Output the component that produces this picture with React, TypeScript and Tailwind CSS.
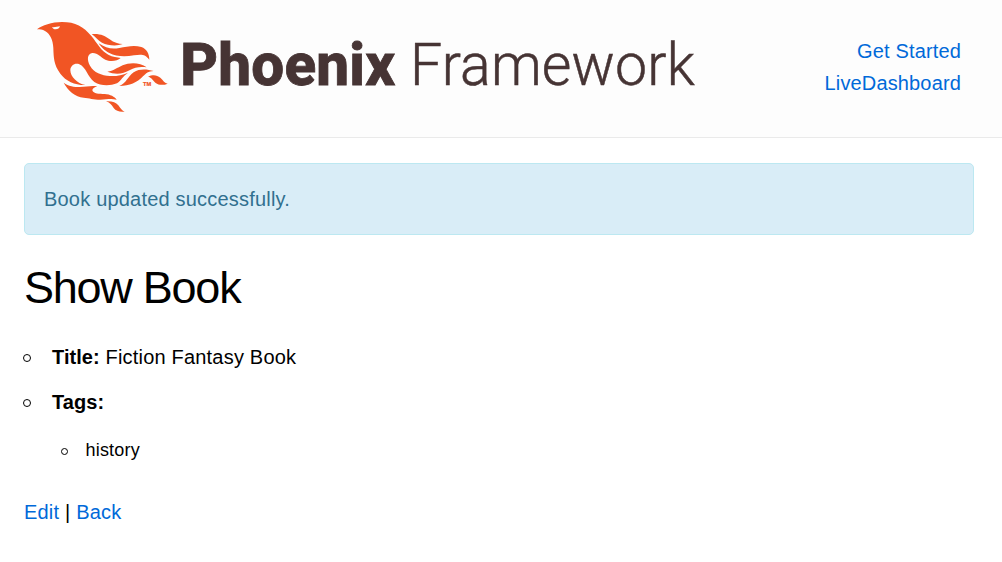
function Bird() {
  return (
    <svg className="block h-[105px] w-[145px] shrink-0" viewBox="0 0 435 315" fill="#f15524" role="img" aria-label="Phoenix">
      <path
        fillRule="evenodd"
        d="M21 43 C36 31 66 21 96 21 C137 21 160 35 184 63 C203 86 213 108 235 119 C248 126 262 127 272 129 C262 139 240 141 226 134 C212 127 203 113 187 114 C172 116 170 134 180 152 C192 173 214 181 240 183 C260 184 277 180 294 173 C278 184 274 196 261 205 C240 213 212 213 193 201 C172 185 168 156 148 148 C134 143 122 152 121 165 C121 185 141 205 166 210 C137 211 108 199 91 176 C71 149 71 127 70 99 C69 76 61 57 45 48 C38 44 29 43 21 43 Z M66 36 C73 38 82 34 90 34 C88 40 84 43 77 43 C72 43 68 40 66 36 Z"
      />
      <path d="M185 57 C211 55 225 62 239 73 C252 83 265 87 278 87 C261 94 234 92 216 83 C203 76 197 66 185 57 Z" />
      <path d="M206 85 C227 100 246 103 268 99 C291 95 311 89 334 96 C350 102 358 116 358 134 C346 118 335 117 312 121 C285 126 258 125 238 114 C222 106 214 97 206 85 Z" />
      <path d="M232 170 C250 168 262 158 278 151 C299 142 330 142 350 157 C330 154 314 157 300 165 C278 178 255 179 232 170 Z" />
      <path d="M268 213 C289 205 292 186 311 172 C329 160 352 163 371 168 C354 169 349 174 339 184 C321 203 299 213 268 213 Z" />
      <path d="M354 185 C369 178 381 180 391 188 C400 197 404 204 413 206 C401 211 386 211 377 204 C368 196 365 187 354 185 Z" />
      <path d="M101 203 C116 214 132 216 149 216 C169 216 183 211 202 214 C193 217 187 220 187 226 C190 237 208 237 224 237 C241 238 254 245 260 254 C241 249 230 254 211 254 C190 254 178 249 161 248 C136 246 113 226 101 203 Z" />
      <path d="M228 259 C247 258 257 262 265 271 C272 280 276 288 284 290 C269 292 258 288 251 279 C244 269 239 262 228 259 Z" />
      <text x="339" y="214" textLength="25" lengthAdjust="spacingAndGlyphs" className="font-['Liberation_Sans',sans-serif] text-[15px] font-bold" stroke="#f15524" strokeWidth="0.6">TM</text>
    </svg>
  );
}

function Wordmark() {
  return (
    <svg className="ml-[-5px] block h-[105px] w-[540px] shrink-0 overflow-visible" viewBox="170 15 540 105" fill="#463434">
      <text x="180.3" y="85.2" textLength="215" lengthAdjust="spacingAndGlyphs" className="font-[Roboto,sans-serif] text-[60px] leading-none font-extrabold" stroke="#463434" strokeWidth="0.8">Phoenix</text>
      <text x="410" y="85.2" textLength="285" lengthAdjust="spacingAndGlyphs" className="font-[Roboto,sans-serif] text-[60px] leading-none font-light" stroke="#463434" strokeWidth="0.5">Framework</text>
    </svg>
  );
}

export default function App() {
  return (
    <div className="h-[562px] w-full overflow-hidden bg-white font-['Liberation_Sans',Arial,sans-serif] text-[20px] leading-8 tracking-[0.2px] text-black">
      <header className="flex h-[138px] items-start justify-between border-b border-[#eaeaea] bg-[#fdfdfd] pr-[41px] pl-[30px]">
        <a href="#" className="flex pt-[15px]">
          <Bird />
          <Wordmark />
        </a>
        <nav className="flex flex-col pt-[35px] text-right tracking-[0.15px] text-[#0069d9]">
          <a href="#">Get Started</a>
          <a href="#">LiveDashboard</a>
        </nav>
      </header>
      <main className="pr-7 pl-6 pt-[25px]">
        <p className="h-[72px] rounded-[5px] border border-[#bce8f1] bg-[#d9edf7] px-[19px] py-[19px] text-[#31708f]">Book updated successfully.</p>
        <h1 className="mt-[25px] text-[45px] leading-[56px] tracking-[-1.25px]">Show Book</h1>
        <ul className="mt-[25px]">
          <li className="flex items-center">
            <i className="mt-px -ml-px mr-[21px] size-2 rounded-full border border-black" />
            <span><b className="tracking-[0.05px]">Title:</b> Fiction Fantasy Book</span>
          </li>
          <li className="mt-[13px]">
            <div className="flex items-center">
              <i className="mt-px -ml-px mr-[21px] size-2 rounded-full border border-black" />
              <b className="tracking-[0.05px]">Tags:</b>
            </div>
            <ul className="mt-[18px] pl-[37px] text-[18px] leading-[29px]">
              <li className="flex items-center">
                <i className="mt-px mr-[17.5px] size-[7px] rounded-full border border-black" />
                history
              </li>
            </ul>
          </li>
        </ul>
        <div className="mt-[31px]"><a href="#" className="text-[#0069d9]">Edit</a> | <a href="#" className="text-[#0069d9]">Back</a></div>
      </main>
    </div>
  );
}
